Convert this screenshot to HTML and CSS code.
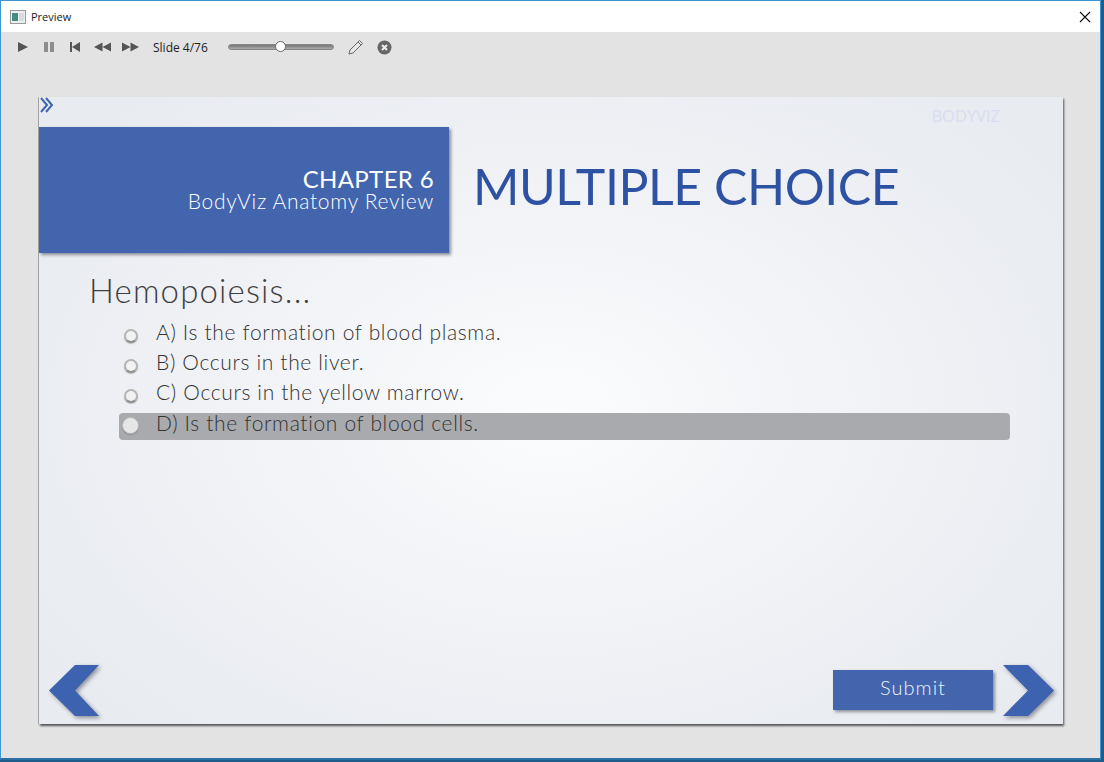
FILE: index.html
```html
<!DOCTYPE html>
<html>
<head>
<meta charset="utf-8">
<title>Preview</title>
<link rel="stylesheet" href="styles.css">
</head>
<body>
<div class="window">
    <div class="titlebar">
        <svg class="app-icon" width="16" height="14" viewBox="0 0 16 14">
            <rect x="0.5" y="0.5" width="15" height="13" fill="#eee" stroke="#999"/>
            <rect x="2" y="3" width="6" height="8" fill="#3f8f80"/>
            <rect x="9" y="3" width="5" height="8" fill="#d5dde0"/>
        </svg>
        <span class="title">Preview</span>
        <svg class="close" width="12" height="12" viewBox="0 0 12 12">
            <path d="M1 1L11 11M11 1L1 11" stroke="#111" stroke-width="1.1" fill="none"/>
        </svg>
    </div>
    <div class="toolbar">
        <svg class="tool" width="12" height="12" viewBox="0 0 12 12"><path d="M1 1L11 6L1 11Z" fill="#555"/></svg>
        <svg class="tool" width="12" height="12" viewBox="0 0 12 12"><path d="M1 1H5V11H1ZM7 1H11V11H7Z" fill="#8d8d8d"/></svg>
        <svg class="tool tool-skip" width="12" height="12" viewBox="0 0 12 12"><path d="M1 1H3V11H1ZM11 1V11L3 6Z" fill="#555"/></svg>
        <svg class="tool tool-wide" width="17" height="12" viewBox="0 0 17 12"><path d="M0 6L8.5 1.5V10.5ZM8.5 6L17 1.5V10.5Z" fill="#555"/></svg>
        <svg class="tool tool-wide" width="17" height="12" viewBox="0 0 17 12"><path d="M0 1.5L8.5 6L0 10.5ZM8.5 1.5L17 6L8.5 10.5Z" fill="#555"/></svg>
        <span class="slide-count">Slide 4/76</span>
        <div class="slider"><div class="thumb"></div></div>
        <svg class="pencil" width="16" height="16" viewBox="0 0 16 16">
            <path d="M11.5 1.5L14.5 4.5L5 14L1 15L2 11Z" fill="#e8e8e8" stroke="#666" stroke-width="1"/>
            <path d="M10 3L13 6" stroke="#666" fill="none"/>
        </svg>
        <svg class="stop" width="15" height="15" viewBox="0 0 15 15">
            <circle cx="7.5" cy="7.5" r="7" fill="#666"/>
            <path d="M5 5L10 10M10 5L5 10" stroke="#eee" stroke-width="2" fill="none"/>
        </svg>
    </div>
    <div class="stage">
        <div class="slide">
            <svg class="menu-arrows" width="16" height="16" viewBox="0 0 16 16">
                <path d="M2 1L8 8L2 15M7 1L13 8L7 15" stroke="#3f63b0" stroke-width="2" fill="none"/>
            </svg>
            <div class="watermark">BODYVIZ</div>
            <div class="header">
                <div class="banner">
                    <div class="chapter">CHAPTER 6</div>
                    <div class="subtitle">BodyViz Anatomy Review</div>
                </div>
                <h1 class="heading">MULTIPLE CHOICE</h1>
            </div>
            <div class="question">Hemopoiesis...</div>
            <ul class="options">
                <li><span class="radio"></span>A) Is the formation of blood plasma.</li>
                <li><span class="radio"></span>B) Occurs in the liver.</li>
                <li><span class="radio"></span>C) Occurs in the yellow marrow.</li>
                <li class="hover"><span class="radio"></span>D) Is the formation of blood cells.</li>
            </ul>
            <div class="footer">
                <svg class="nav" width="51" height="51" viewBox="0 0 51 51">
                    <path d="M0 25.5L26 0H50L26 25.5L50 51H26Z" fill="#3c62b0"/>
                </svg>
                <div class="submit">Submit</div>
                <svg class="nav" width="51" height="51" viewBox="0 0 51 51">
                    <path d="M0 0H25L51 25.5L25 51H0L25 25.5Z" fill="#3c62b0"/>
                </svg>
            </div>
        </div>
    </div>
</div>
</body>
</html>
```

FILE: styles.css
```css
*{padding:0;margin:0;box-sizing:border-box;}
html,body{height:100%;overflow:hidden;}
body{
    background:#1f5c8c;
    font-family:"Liberation Sans",sans-serif;
}
li{list-style:none;}
.window{
    width:1101px;
    height:760px;
    border:1px solid #3f94d2;
    border-bottom:2px solid #2a6f9f;
    background:#e3e3e3;
    display:flex;
    flex-direction:column;
}
.titlebar{
    height:31px;
    background:#fff;
    display:flex;
    align-items:center;
    padding:0 9px 0 9px;
    flex:none;
}
.title{
    font-family:"Open Sans",sans-serif;
    font-size:11px;
    color:#222;
    margin-left:5px;
}
.close{margin-left:auto;}
.toolbar{
    height:32px;
    display:flex;
    align-items:center;
    padding:0 0 2px 16px;
    flex:none;
}
.tool{margin-right:14px;}
.tool-skip{margin-right:13px;}
.tool-wide{margin-right:11px;}
.slide-count{
    font-family:"Open Sans",sans-serif;
    font-size:12px;
    color:#222;
    margin-left:3px;
    width:75px;
}
.slider{
    width:106px;
    height:6px;
    background:linear-gradient(#777,#aaa);
    border-radius:3px;
    border:1px solid #888;
    position:relative;
}
.thumb{
    position:absolute;
    left:46px;
    top:-4px;
    width:11px;
    height:11px;
    border-radius:50%;
    background:#fff;
    border:1px solid #666;
}
.pencil{margin-left:14px;}
.stop{margin-left:13px;}
.stage{
    flex:1;
    padding:33px 36px 33px 38px;
    display:flex;
}
.slide{
    width:1024px;
    height:627px;
    position:relative;
    display:flex;
    flex-direction:column;
    background:radial-gradient(ellipse 620px 420px at 50% 50%,#fbfcfd,#eff1f5 60%,#e8ebf0);
    box-shadow:1px 2px 2px #555,-1px 0 0 #a8a8a8;
    padding-top:30px;
}
.menu-arrows{
    position:absolute;
    left:0;
    top:0;
}
.watermark{
    position:absolute;
    right:63px;
    top:7px;
    font-family:"Open Sans",sans-serif;
    font-size:16.5px;
    color:#d8ddf0;
}
.header{
    display:flex;
    align-items:center;
}
.banner{
    width:410px;
    height:126px;
    background:#4265ad;
    box-shadow:2px 2px 3px #8b8f98;
    color:#fff;
    text-align:right;
    padding:39px 15px 0 0;
    font-family:"Lato",sans-serif;
}
.chapter{
    font-size:24px;
    line-height:26px;
    letter-spacing:0.35px;
}
.subtitle{
    font-size:21px;
    line-height:19px;
    letter-spacing:0.7px;
    font-weight:300;
    margin-top:-1px;
}
.heading{
    margin:-9px 0 0 24px;
    font-family:"Lato",sans-serif;
    font-size:50px;
    font-weight:400;
    color:#2e52a3;
    letter-spacing:-0.45px;
    white-space:nowrap;
}
.question{
    font-family:"Lato",sans-serif;
    font-size:33px;
    font-weight:300;
    color:#404040;
    line-height:40px;
    margin:17px 0 0 50px;
    letter-spacing:1.15px;
}
.options{
    margin:7px 53px 0 80px;
    font-family:"Lato",sans-serif;
    font-size:21px;
    font-weight:300;
    color:#333;
    letter-spacing:0.65px;
}
.options li{
    height:30px;
    line-height:30px;
    display:flex;
    padding-left:37px;
    position:relative;
}
.options li.hover{
    height:27px;
    line-height:20px;
    background:#a9aaad;
    border-radius:4px;
    margin-top:6px;
}
.radio{
    position:absolute;
    left:5px;
    top:12px;
    width:14px;
    height:14px;
    border-radius:50%;
    background:#f2f2f2;
    border:2px solid #b5b5b5;
    border-bottom-color:#8f8f8f;
    box-shadow:0 1px 1px #bbb;
}
.hover .radio{
    top:4px;
    width:17px;
    height:17px;
    left:3px;
    border:1px solid #bbb;
    background:#e6e6e6;
    box-shadow:0 1px 1px #888;
}
.footer{
    margin-top:auto;
    display:flex;
    align-items:center;
    padding:0 9px 8px 10px;
}
.nav{filter:drop-shadow(2px 2px 2px #8b8f98);flex:none;}
.submit{
    margin:0 10px 1px auto;
    width:160px;
    height:40px;
    line-height:35px;
    background:#4265ad;
    box-shadow:2px 2px 3px #8b8f98;
    color:#eef2fb;
    text-align:center;
    font-family:"Lato",sans-serif;
    font-size:20px;
    font-weight:300;
    letter-spacing:1px;
}
```
